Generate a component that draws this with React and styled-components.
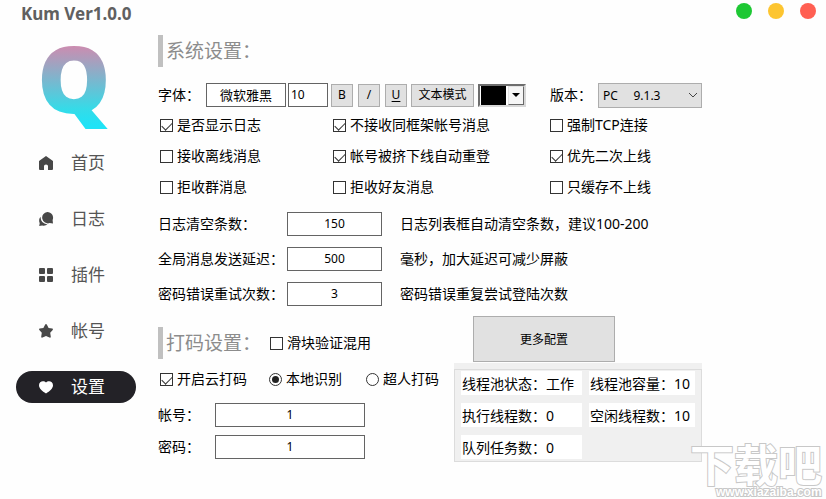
import React, { useState } from 'react';
import styled, { createGlobalStyle } from 'styled-components';

const GlobalStyle = createGlobalStyle`
    * {
        box-sizing: border-box;
    }

    body {
        margin: 0;
        background: #fefefe;
        color: #000;
        font-family: 'Noto Sans', 'Noto Sans CJK SC', sans-serif;
        font-size: 14px;
        line-height: 20px;
    }

    button, input, select {
        font-family: inherit;
        color: inherit;
        margin: 0;
    }
`;

const Window = styled.div`
    position: relative;
    min-height: 100vh;
    display: flex;
    flex-direction: column;
`;

const TitleBar = styled.header`
    display: flex;
    justify-content: space-between;
    align-items: flex-start;
    padding: 3px 10px 0 21px;
`;

const Title = styled.h1`
    margin: 0;
    font-size: 17px;
    line-height: 22px;
    font-weight: 700;
    color: #606060;
`;

const WindowButtons = styled.div`
    display: flex;
    gap: 16px;
`;

const Dot = styled.button`
    width: 16px;
    height: 16px;
    padding: 0;
    border: none;
    border-radius: 50%;
    background: ${({ color }) => color};
`;

const Body = styled.div`
    flex: 1;
    display: flex;
`;

const Sidebar = styled.aside`
    flex: 0 0 152px;
    padding: 18px 16px 0;
`;

const Logo = styled.svg`
    display: block;
    overflow: visible;
    width: 72px;
    height: 88px;
    margin: 0 0 16px 22px;
`;

const Nav = styled.nav`
    display: flex;
    flex-direction: column;
    gap: 24px;
`;

const NavItem = styled.a`
    display: flex;
    align-items: center;
    gap: 17px;
    height: 32px;
    padding-left: 22px;
    border-radius: 16px;
    font-size: 17px;
    text-decoration: none;
    color: ${({ $active }) => $active ? '#fff' : '#555'};
    background: ${({ $active }) => $active ? '#232227' : 'none'};

    svg {
        width: 16px;
        height: 16px;
        fill: ${({ $active }) => $active ? '#fff' : '#484848'};
    }
`;

const Main = styled.main`
    flex: 1;
    padding: 10px 16px 0 6px;
`;

const Heading = styled.h2`
    margin: 0;
    padding-left: 3px;
    border-left: 5px solid #c0c0c0;
    font-size: 19px;
    line-height: 32px;
    font-weight: 400;
    color: #8c8c8c;
`;

const Columns = styled.div`
    display: grid;
    grid-template-columns: 173px 217px 1fr;
    row-gap: 11px;
    padding-left: 2px;
`;

const Toolbar = styled.div`
    display: flex;
    align-items: center;
    height: 24px;
    margin: 16px 0 8px;
`;

const ToolbarLabel = styled.span`
    width: 48px;
`;

const Tools = styled.div`
    display: flex;
    align-items: center;
    gap: ${({ $gap }) => $gap}px;
    margin-right: ${({ $after }) => $after}px;
`;

const TextBox = styled.input`
    width: ${({ $width }) => $width}px;
    height: 24px;
    padding: 0 2px 2px;
    border: 1px solid #646464;
    background: #fff;
    font-size: 12px;
    text-align: ${({ $align }) => $align || 'center'};
    outline: none;
`;

const FontButton = styled.button`
    width: 80px;
    height: 24px;
    padding: 0;
    border: 1px solid #646464;
    background: #fff;
    font-size: 13px;
    line-height: 20px;
`;

const ToolButton = styled.button`
    width: ${({ $width }) => $width || 22}px;
    height: 23px;
    padding: 0;
    border: 1px solid #adadad;
    background: #e1e1e1;
    font-size: 12px;
    line-height: 20px;
    text-decoration: ${({ $underline }) => $underline ? 'underline' : 'none'};
    text-underline-offset: 2px;
`;

const ColorPicker = styled.button`
    display: flex;
    width: 48px;
    height: 23px;
    padding: 0;
    border: 2px solid;
    border-color: #6d6d6d #d8d8d8 #d8d8d8 #6d6d6d;
    background: #fff;
`;

const Swatch = styled.span`
    flex: 1;
    align-self: stretch;
    margin: 0 2px 0 1px;
    background: #000;
`;

const DropArrow = styled.span`
    width: 16px;
    align-self: stretch;
    display: grid;
    place-items: center;
    border: 1px solid;
    border-color: #e3e3e3 #696969 #696969 #e3e3e3;
    background: #f6f6f6;

    &::after {
        content: '';
        border: 4px solid transparent;
        border-top-color: #000;
        border-bottom: none;
    }
`;

const SelectBox = styled.div`
    display: grid;
    align-items: center;
    width: 104px;

    > * {
        grid-area: 1 / 1;
    }

    svg {
        justify-self: end;
        margin-right: 4px;
        pointer-events: none;
    }
`;

const Select = styled.select`
    appearance: none;
    width: 100%;
    height: 25px;
    padding: 0 4px;
    border: 1px solid #adadad;
    border-radius: 0;
    background: #e1e1e1;
    font-size: 12px;
    white-space: pre;
`;

const CheckLabel = styled.label`
    display: flex;
    align-items: center;
    gap: 4px;
    white-space: nowrap;
`;

const CheckBox = styled.input`
    appearance: none;
    display: grid;
    justify-items: center;
    align-content: start;
    width: 13px;
    height: 13px;
    border: 1px solid #333;
    background: #fff;

    &:checked::after {
        content: '';
        width: 9px;
        height: 5px;
        margin-top: 2px;
        border: solid #333;
        border-width: 0 0 1px 1px;
        transform: rotate(-45deg);
    }
`;

const Radio = styled.input`
    appearance: none;
    display: grid;
    place-items: center;
    width: 13px;
    height: 13px;
    border: 1px solid #333;
    border-radius: 50%;
    background: #fff;

    &:checked::after {
        content: '';
        width: 7px;
        height: 7px;
        border-radius: 50%;
        background: #222;
    }
`;

const Limits = styled.div`
    display: flex;
    flex-direction: column;
    gap: 11px;
    margin-top: 15px;
`;

const Field = styled.div`
    display: flex;
    align-items: center;
`;

const FieldLabel = styled.label`
    width: ${({ $width }) => $width}px;
`;

const Note = styled.span`
    padding-left: 18px;
`;

const Lower = styled.div`
    display: grid;
    grid-template-columns: 296px 248px;
    margin-top: 10px;
`;

const Captcha = styled.section`
    padding-top: 11px;
`;

const CaptchaHead = styled.div`
    display: flex;
    align-items: center;
    gap: 9px;
`;

const Modes = styled.div`
    display: flex;
    align-items: center;
    padding: 10px 0 14px 2px;
`;

const ModeLabel = styled(CheckLabel)`
    margin-left: ${({ $before }) => $before || 0}px;
`;

const Credentials = styled.div`
    display: flex;
    flex-direction: column;
    gap: 8px;
`;

const Side = styled.section`
    display: flex;
    flex-direction: column;
`;

const MoreButton = styled.button`
    width: 142px;
    height: 46px;
    margin-left: 19px;
    border: 1px solid #adadad;
    background: #e1e1e1;
    font-size: 12px;
`;

const Pool = styled.div`
    margin-top: 1px;
    padding-top: 6px;
    background: #f0f0f0;
`;

const PoolFrame = styled.div`
    display: grid;
    grid-template-columns: 121px 106px;
    gap: 8px 7px;
    padding: 1px 6px 2px;
    border: 1px solid #dcdcdc;
`;

const PoolCell = styled.span`
    height: 24px;
    padding-left: 1px;
    line-height: 26px;
    background: #fff;
    white-space: nowrap;
`;

// floats over the bottom right corner of the window
const Watermark = styled.svg`
    position: absolute;
    right: 0;
    bottom: 0;
    width: 138px;
    height: 60px;
    pointer-events: none;

    text {
        font-weight: 700;
        fill: #fff;
        stroke: #c8c8c8;
        paint-order: stroke;
    }
`;

const icons = {
    home: <path d="M8 1 L15 6 V14 Q15 15 14 15 H10 V11 Q10 9.500 8 9.500 Q6 9.500 6 11 V15 H2 Q1 15 1 14 V6 Z" />,
    chat: (
        <>
            <path d="M9.300 1 A5.700 5.700 0 0 1 14.600 9 L15 12.600 L11.600 12.100 A5.700 5.700 0 1 1 9.300 1 Z" />
            <path d="M2.500 5.800 Q2.600 12.400 9.500 13.600 Q7 15.300 4.200 14.500 L1.200 15 L1.700 12.200 Q.2 8.800 2.500 5.800 Z" />
        </>
    ),
    grid: (
        <>
            <rect x="1" y="1" width="6" height="6" rx="1" />
            <rect x="9" y="1" width="6" height="6" rx="1" />
            <rect x="1" y="9" width="6" height="6" rx="1" />
            <rect x="9" y="9" width="6" height="6" rx="1" />
        </>
    ),
    star: <path d="M7.200 1.500 Q8 .4 8.800 1.500 L10.600 5 L14.300 5.600 Q15.500 6 14.700 7 L12.200 9.700 L12.800 13.800 Q12.700 15 11.500 14.600 L8 13 L4.500 14.600 Q3.300 15 3.200 13.800 L3.800 9.700 L1.300 7 Q.5 6 1.700 5.600 L5.400 5 Z" />,
    heart: <path d="M8 3.500 C6.300 1.300 1 1.500 1 6.200 C1 9.500 4.300 12 8 14.500 C11.700 12 15 9.500 15 6.200 C15 1.500 9.700 1.300 8 3.500 Z" />,
};

const menu = [
    { icon: 'home', text: '首页' },
    { icon: 'chat', text: '日志' },
    { icon: 'grid', text: '插件' },
    { icon: 'star', text: '帐号' },
    { icon: 'heart', text: '设置' },
];

const options = [
    { text: '是否显示日志', checked: true },
    { text: '不接收同框架帐号消息', checked: true },
    { text: '强制TCP连接' },
    { text: '接收离线消息' },
    { text: '帐号被挤下线自动重登', checked: true },
    { text: '优先二次上线', checked: true },
    { text: '拒收群消息' },
    { text: '拒收好友消息' },
    { text: '只缓存不上线' },
];

const limits = [
    { id: 'clear', label: '日志清空条数：', value: '150', note: '日志列表框自动清空条数，建议100-200' },
    { id: 'delay', label: '全局消息发送延迟：', value: '500', note: '毫秒，加大延迟可减少屏蔽' },
    { id: 'retry', label: '密码错误重试次数：', value: '3', note: '密码错误重复尝试登陆次数' },
];

const pool = ['线程池状态：工作', '线程池容量：10', '执行线程数：0', '空闲线程数：10', '队列任务数：0'];

function Check({ text, checked }) {
    return (
        <CheckLabel>
            <CheckBox type="checkbox" defaultChecked={checked} />
            {text}
        </CheckLabel>
    )
}

function App() {
    const [page, setPage] = useState('设置');

    return (
        <Window lang="zh-CN">
            <GlobalStyle />
            <TitleBar>
                <Title>Kum Ver1.0.0</Title>
                <WindowButtons>
                    <Dot color="#1ec834" aria-label="最小化" />
                    <Dot color="#fdc530" aria-label="最大化" />
                    <Dot color="#ff5f52" aria-label="关闭" />
                </WindowButtons>
            </TitleBar>
            <Body>
                <Sidebar>
                    <Logo viewBox="0 0 72 88">
                        <defs>
                            <linearGradient id="logo" gradientUnits="userSpaceOnUse" x1="0" y1="3" x2="0" y2="82">
                                <stop offset="0" stopColor="#cc8cb0" />
                                <stop offset="0.8" stopColor="#35dbe8" />
                                <stop offset="1" stopColor="#1fe3f6" />
                            </linearGradient>
                        </defs>
                        <text x="36" y="70" textAnchor="middle" fontFamily="Open Sans" fontWeight="800" fontSize="92" fill="url(#logo)">Q</text>
                    </Logo>
                    <Nav>
                        {menu.map(({ icon, text }) => (
                            <NavItem key={text} href="#" $active={page === text} onClick={() => setPage(text)}>
                                <svg viewBox="0 0 16 16">{icons[icon]}</svg>
                                {text}
                            </NavItem>
                        ))}
                    </Nav>
                </Sidebar>
                <Main>
                    <Heading>系统设置：</Heading>
                    <Toolbar>
                        <ToolbarLabel>字体：</ToolbarLabel>
                        <Tools $gap={2} $after={3}>
                            <FontButton>微软雅黑</FontButton>
                            <TextBox $width={40} $align="left" defaultValue="10" aria-label="字号" />
                        </Tools>
                        <Tools $gap={5} $after={4}>
                            <ToolButton>B</ToolButton>
                            <ToolButton>/</ToolButton>
                            <ToolButton $underline>U</ToolButton>
                        </Tools>
                        <Tools $gap={4} $after={24}>
                            <ToolButton $width={63}>文本模式</ToolButton>
                            <ColorPicker aria-label="颜色">
                                <Swatch />
                                <DropArrow />
                            </ColorPicker>
                        </Tools>
                        <ToolbarLabel as="label" htmlFor="version">版本：</ToolbarLabel>
                        <SelectBox>
                            <Select id="version">
                                <option>{'PC\u00a0\u00a0\u00a0\u00a0\u00a09.1.3'}</option>
                            </Select>
                            <svg width="10" height="6" viewBox="0 0 10 6" fill="none" stroke="#444">
                                <path d="M1 1 L5 5 L9 1" />
                            </svg>
                        </SelectBox>
                    </Toolbar>
                    <Columns>
                        {options.map((option) => <Check key={option.text} {...option} />)}
                    </Columns>
                    <Limits>
                        {limits.map(({ id, label, value, note }) => (
                            <Field key={id}>
                                <FieldLabel $width={129} htmlFor={id}>{label}</FieldLabel>
                                <TextBox $width={95} id={id} defaultValue={value} />
                                <Note>{note}</Note>
                            </Field>
                        ))}
                    </Limits>
                    <Lower>
                        <Captcha>
                            <CaptchaHead>
                                <Heading>打码设置：</Heading>
                                <Check text="滑块验证混用" />
                            </CaptchaHead>
                            <Modes>
                                <Check text="开启云打码" checked />
                                <ModeLabel $before={22}>
                                    <Radio type="radio" name="mode" defaultChecked />
                                    本地识别
                                </ModeLabel>
                                <ModeLabel $before={24}>
                                    <Radio type="radio" name="mode" />
                                    超人打码
                                </ModeLabel>
                            </Modes>
                            <Credentials>
                                <Field>
                                    <FieldLabel $width={57} htmlFor="account">帐号：</FieldLabel>
                                    <TextBox $width={150} id="account" defaultValue="1" />
                                </Field>
                                <Field>
                                    <FieldLabel $width={57} htmlFor="password">密码：</FieldLabel>
                                    <TextBox $width={150} id="password" defaultValue="1" />
                                </Field>
                            </Credentials>
                        </Captcha>
                        <Side>
                            <MoreButton>更多配置</MoreButton>
                            <Pool>
                                <PoolFrame>
                                    {pool.map((text) => <PoolCell key={text}>{text}</PoolCell>)}
                                </PoolFrame>
                            </Pool>
                        </Side>
                    </Lower>
                </Main>
            </Body>
            <Watermark viewBox="0 0 138 60">
                <text x="2" y="43" fontFamily="Noto Sans CJK SC" fontSize="44" strokeWidth="2">下载吧</text>
                <text x="28" y="57" fontFamily="Liberation Sans" fontSize="12" strokeWidth="2">www.xiazaiba.com</text>
            </Watermark>
        </Window>
    )
}

export default App;
